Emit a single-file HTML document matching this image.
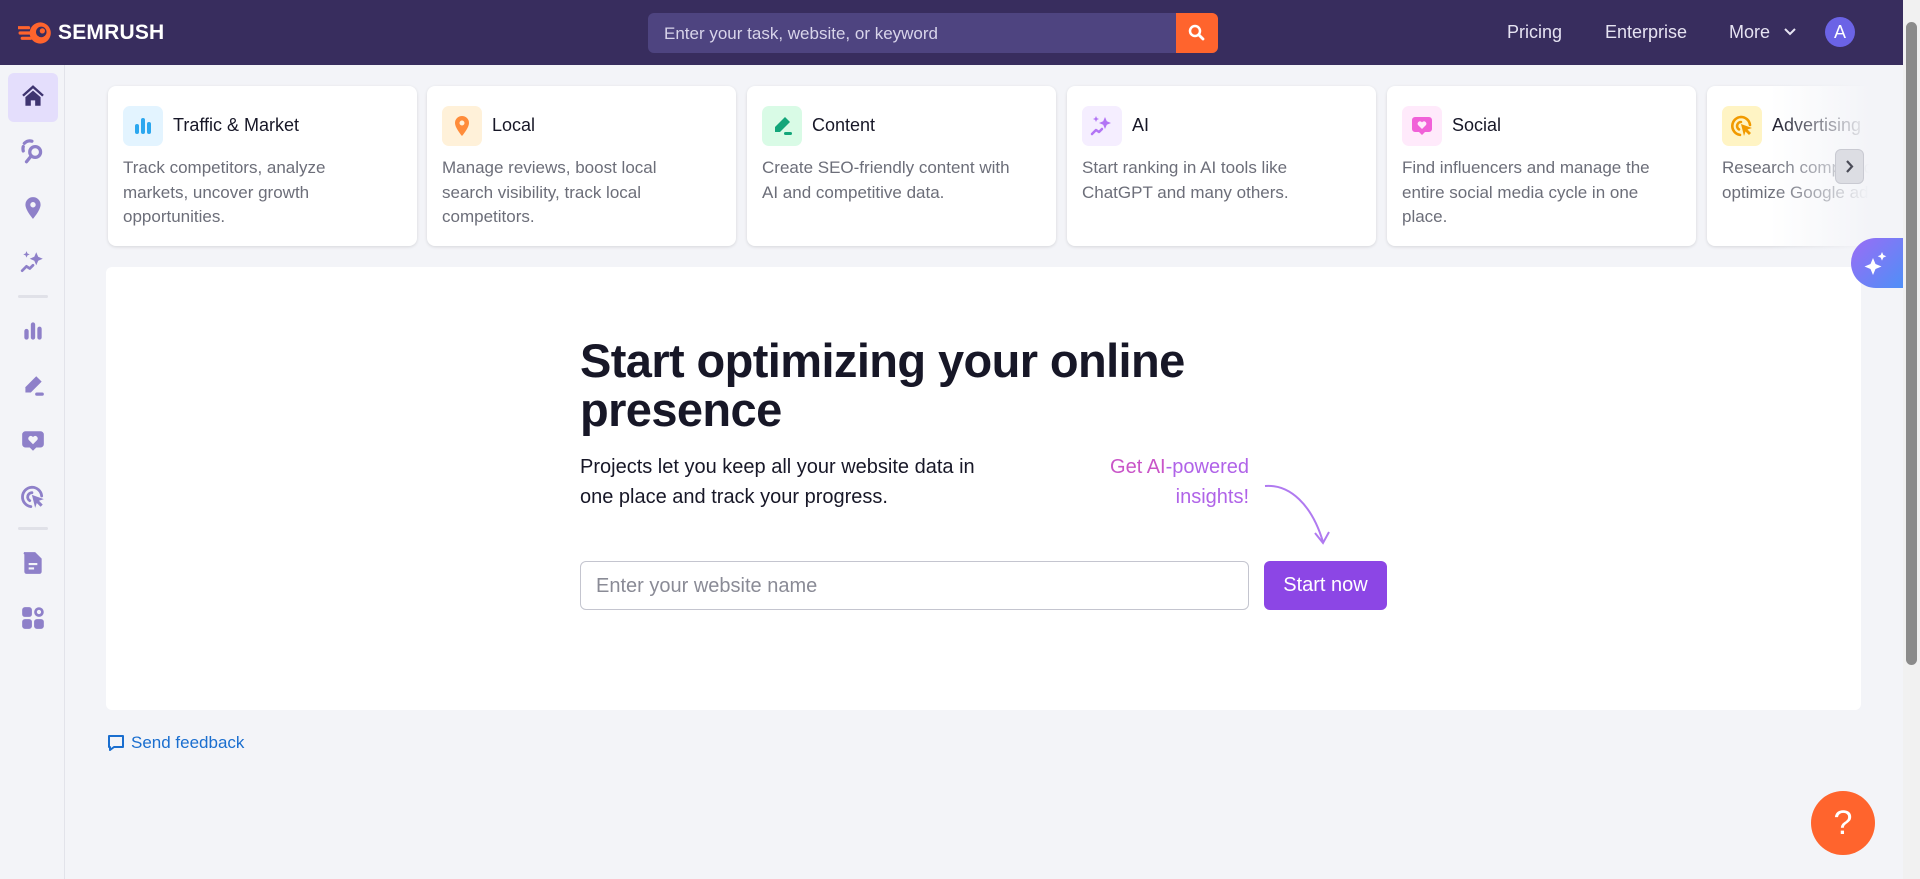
<!DOCTYPE html>
<html><head><meta charset="utf-8"><style>
*{box-sizing:border-box;margin:0;padding:0}
body{width:1920px;height:879px;overflow:hidden;background:#f3f4f8;font-family:"Liberation Sans",sans-serif;position:relative;color:#1b1b29}
.hdr{position:absolute;left:0;top:0;width:1903px;height:65px;background:#382d5e}
.logo{position:absolute;left:18px;top:20px;display:flex;align-items:center;color:#fff;font-weight:bold;font-size:21px;letter-spacing:0.2px}
.search{position:absolute;left:648px;top:13px;width:570px;height:40px;background:#4e4480;border-radius:6px}
.search span{position:absolute;left:16px;top:11px;color:#d8d4ea;font-size:17px}
.sbtn{position:absolute;right:0;top:0;width:42px;height:40px;background:#ff642d;border-radius:0 6px 6px 0}
.nav{position:absolute;top:22px;color:#e6e3f2;font-size:18px}
.av{position:absolute;left:1825px;top:17px;width:30px;height:30px;border-radius:50%;background:#6b63e6;color:#fff;font-size:18px;text-align:center;line-height:30px}
.scroll{position:absolute;left:1903px;top:0;width:17px;height:879px;background:#f1f1f1;z-index:10}
.scroll div{position:absolute;left:3px;top:22px;width:11px;height:643px;background:#8b8b8b;border-radius:6px}
.side{position:absolute;left:0;top:65px;width:65px;height:814px;border-right:1px solid #e2e3ea;background:#f3f4f8}
.si{position:absolute;left:20px;width:26px;height:26px}
.div{position:absolute;left:18px;width:30px;height:3px;background:#e0e1e8;border-radius:2px}
.card{position:absolute;top:86px;width:309px;height:160px;background:#fff;border-radius:8px;box-shadow:0 1px 3px rgba(0,0,0,.12)}
.ib{position:absolute;left:15px;top:20px;width:40px;height:40px;border-radius:7px}
.ct{position:absolute;left:65px;top:29px;font-size:18px;color:#171727}
.cd{position:absolute;left:15px;top:70px;width:258px;font-size:17px;line-height:24.5px;color:#6c6e79}
.panel{position:absolute;left:106px;top:267px;width:1755px;height:443px;background:#fff;border-radius:6px}
h1{position:absolute;left:580px;top:336px;font-size:47px;line-height:49px;font-weight:bold;color:#171727;letter-spacing:-0.6px}
.p{position:absolute;left:580px;top:452px;font-size:20px;line-height:30px;color:#171727;width:420px}
.ai{position:absolute;left:1040px;top:452px;width:209px;text-align:right;font-size:20px;line-height:30px;color:#b063e8}
.inp{position:absolute;left:580px;top:561px;width:669px;height:49px;border:1px solid #c4c5cf;border-radius:6px;color:#8a8b96;font-size:20px;padding:13px 15px}
.btn{position:absolute;left:1264px;top:561px;width:123px;height:49px;background:#8c46e5;border-radius:6px;color:#fff;font-size:20px;text-align:center;line-height:49px}
</style></head><body>
<svg width="0" height="0" style="position:absolute"><defs>
<symbol id="bars" viewBox="0 0 24 24"><rect x="4" y="10" width="4" height="10" rx="2"/><rect x="10" y="4" width="4" height="16" rx="2"/><rect x="16" y="8" width="4" height="12" rx="2"/></symbol>
<symbol id="pin" viewBox="0 0 24 24"><path d="M12 2a7 7 0 0 0-7 7c0 5 7 13 7 13s7-8 7-13a7 7 0 0 0-7-7zm0 9.5a2.5 2.5 0 1 1 0-5 2.5 2.5 0 0 1 0 5z"/></symbol>
<symbol id="pen" viewBox="0 0 24 24"><path d="M15 3l5 5-10 10H5v-5z"/><rect x="14" y="18" width="8" height="3" rx="1.5"/></symbol>
<symbol id="spark" viewBox="0 0 24 24"><path d="M15 3l1.8 4.2L21 9l-4.2 1.8L15 15l-1.8-4.2L9 9l4.2-1.8z"/><path d="M6 2l.9 2.1L9 5l-2.1.9L6 8l-.9-2.1L3 5l2.1-.9z"/><path d="M2 20l4-4 3 2 3-3" stroke-width="2.5" stroke-linecap="round" stroke-linejoin="round" fill="none" stroke="currentColor"/></symbol>
<symbol id="heart" viewBox="0 0 24 24"><path d="M5 3h14a3 3 0 0 1 3 3v9a3 3 0 0 1-3 3h-4l-3 3-3-3H5a3 3 0 0 1-3-3V6a3 3 0 0 1 3-3zm7 12l4-4a2.2 2.2 0 0 0-4-2.6A2.2 2.2 0 0 0 8 11z" fill-rule="evenodd"/></symbol>
<symbol id="target" viewBox="0 0 24 24"><path d="M11 3a9 9 0 0 0-1 17.9" stroke="currentColor" stroke-width="2.6" fill="none" stroke-linecap="round"/><path d="M11 8a4 4 0 0 0-2 7.4" stroke="currentColor" stroke-width="2.6" fill="none" stroke-linecap="round"/><path d="M20 11a9 9 0 0 0-9-8" stroke="currentColor" stroke-width="2.6" fill="none" stroke-linecap="round"/><path d="M11 10l11 4-4.5 1.5 3.5 3.5-2 2-3.5-3.5L14 22z"/></symbol>
</defs></svg>

<div class="hdr">
 <div class="logo"><svg width="36" height="26" viewBox="0 0 34 24"><path d="M0 7h10M2 12h9M4 17h8" stroke="#ff642d" stroke-width="3" stroke-linecap="round"/><circle cx="21" cy="12" r="10" fill="#ff642d"/><circle cx="22" cy="11" r="5" fill="#382d5e"/><circle cx="23" cy="10" r="2.5" fill="#ff642d"/></svg><span style="margin-left:4px">SEMRUSH</span></div>
 <div class="search"><span>Enter your task, website, or keyword</span><div class="sbtn"><svg width="42" height="40" viewBox="0 0 42 40"><circle cx="19" cy="18" r="5" stroke="#fff" stroke-width="2.5" fill="none"/><path d="M23 22l4 4" stroke="#fff" stroke-width="2.8" stroke-linecap="round"/></svg></div></div>
 <div class="nav" style="left:1507px">Pricing</div>
 <div class="nav" style="left:1605px">Enterprise</div>
 <div class="nav" style="left:1729px">More</div>
 <svg style="position:absolute;left:1783px;top:25px" width="14" height="14" viewBox="0 0 14 14"><path d="M2 4l5 5 5-5" stroke="#e6e3f2" stroke-width="2" fill="none"/></svg>
 <div class="av">A</div>
</div>

<div class="side">
 <div style="position:absolute;left:8px;top:8px;width:50px;height:49px;background:#e4defc;border-radius:6px"></div>
 <svg class="si" style="top:18px;color:#3e3470" viewBox="0 0 24 24" fill="currentColor"><path d="M12 2L2 11l1.5 1.5L12 5l8.5 7.5L22 11z"/><path d="M5 13l7-6 7 6v8h-5v-5h-4v5H5z"/></svg>
 <svg class="si" style="top:74px;color:#8e80c9" viewBox="0 0 24 24"><circle cx="14" cy="12" r="5" stroke="currentColor" stroke-width="3" fill="none"/><path d="M10 16l-4 5M4 4a7 7 0 0 1 7-2M3 11a8 8 0 0 1 0-4" stroke="currentColor" stroke-width="3" stroke-linecap="round" fill="none"/></svg>
 <svg class="si" style="top:130px;color:#8e80c9" fill="currentColor"><use href="#pin"/></svg>
 <svg class="si" style="top:184px;color:#8e80c9" fill="currentColor"><use href="#spark"/></svg>
 <div class="div" style="top:230px"></div>
 <svg class="si" style="top:253px;color:#8e80c9" fill="currentColor"><use href="#bars"/></svg>
 <svg class="si" style="top:308px;color:#8e80c9" fill="currentColor"><use href="#pen"/></svg>
 <svg class="si" style="top:363px;color:#8e80c9" fill="currentColor"><use href="#heart"/></svg>
 <svg class="si" style="top:419px;color:#8e80c9" fill="currentColor"><use href="#target"/></svg>
 <div class="div" style="top:462px"></div>
 <svg class="si" style="top:485px;color:#8e80c9" viewBox="0 0 24 24" fill="currentColor"><path d="M5 2h9l6 6v12a2 2 0 0 1-2 2H6a2 2 0 0 1-2-2V4a1 1 0 0 1 1-2z"/><path d="M8 13h8M8 17h5" stroke="#f3f4f8" stroke-width="2"/></svg>
 <svg class="si" style="top:540px;color:#8e80c9" viewBox="0 0 24 24" fill="currentColor"><rect x="2" y="2" width="9" height="9" rx="2.5"/><circle cx="17.5" cy="6.5" r="3.2" stroke="currentColor" stroke-width="2.5" fill="none"/><rect x="2" y="13" width="9" height="9" rx="2.5"/><rect x="13" y="13" width="9" height="9" rx="2.5"/></svg>
</div>

<div class="card" style="left:108px"><div class="ib" style="background:#e3f4ff"><svg style="margin:8px" width="24" height="24" fill="#2ba7ef"><use href="#bars"/></svg></div><div class="ct">Traffic &amp; Market</div><div class="cd">Track competitors, analyze markets, uncover growth opportunities.</div></div>
<div class="card" style="left:427px"><div class="ib" style="background:#fff1d9"><svg style="margin:8px" width="24" height="24" fill="#ff8c3a"><use href="#pin"/></svg></div><div class="ct">Local</div><div class="cd">Manage reviews, boost local search visibility, track local competitors.</div></div>
<div class="card" style="left:747px"><div class="ib" style="background:#d9fbe6"><svg style="margin:8px" width="24" height="24" fill="#13a67a"><use href="#pen"/></svg></div><div class="ct">Content</div><div class="cd">Create SEO-friendly content with AI and competitive data.</div></div>
<div class="card" style="left:1067px"><div class="ib" style="background:#f5eeff"><svg style="margin:8px;color:#b274f5" width="24" height="24" fill="#b274f5"><use href="#spark"/></svg></div><div class="ct">AI</div><div class="cd">Start ranking in AI tools like ChatGPT and many others.</div></div>
<div class="card" style="left:1387px"><div class="ib" style="background:#ffeafb"><svg style="margin:8px" width="24" height="24" fill="#f161d8"><use href="#heart"/></svg></div><div class="ct">Social</div><div class="cd">Find influencers and manage the entire social media cycle in one place.</div></div>
<div class="card" style="left:1707px"><div class="ib" style="background:#fff4c4"><svg style="margin:8px;color:#f19a00" width="24" height="24" fill="#f19a00"><use href="#target"/></svg></div><div class="ct">Advertising</div><div class="cd" style="width:230px">Research competitors and optimize Google ads.</div></div>
<div style="position:absolute;left:1770px;top:80px;width:133px;height:175px;background:linear-gradient(90deg,rgba(243,244,248,0),#f3f4f8 75%)"></div>
<div style="position:absolute;left:1835px;top:149px;width:29px;height:35px;background:#dcdde3;border:1px solid #c9cad2;border-radius:6px"><svg width="27" height="33" viewBox="0 0 27 33"><path d="M11 11l5 5.5-5 5.5" stroke="#4a4b57" stroke-width="2.2" fill="none"/></svg></div>

<div class="panel"></div>
<div style="position:absolute;left:1851px;top:238px;width:52px;height:50px;border-radius:25px 0 0 25px;background:linear-gradient(135deg,#9b6cf5,#4f8ff7);z-index:5"><svg width="50" height="50" viewBox="0 0 50 50" fill="#fff"><path d="M22 20l2.5 6 6 2.5-6 2.5-2.5 6-2.5-6-6-2.5 6-2.5z"/><path d="M31 14l1.3 3 3 1.3-3 1.3-1.3 3-1.3-3-3-1.3 3-1.3z"/></svg></div>

<h1>Start optimizing your online<br>presence</h1>
<div class="p">Projects let you keep all your website data in one place and track your progress.</div>
<div class="ai"><span style="color:#c955c8">Get AI</span>-powered<br>insights!</div>
<svg style="position:absolute;left:1260px;top:480px" width="80" height="72" viewBox="0 0 80 72"><path d="M5 6C30 4 52 25 63 62" stroke="#b07af0" stroke-width="2" fill="none"/><path d="M55 53l8 10 6-11" stroke="#b07af0" stroke-width="2" fill="none"/></svg>
<div class="inp">Enter your website name</div>
<div class="btn">Start now</div>

<svg style="position:absolute;left:106px;top:733px" width="20" height="20" viewBox="0 0 20 20"><path d="M3 3h14v11H8l-4 3v-3H3z" stroke="#1a6ecf" stroke-width="2" fill="none" stroke-linejoin="round"/></svg>
<div style="position:absolute;left:131px;top:733px;font-size:17px;color:#1a6ecf">Send feedback</div>

<div style="position:absolute;left:1811px;top:791px;width:64px;height:64px;border-radius:50%;background:#ff642d;color:#fff;font-size:34px;text-align:center;line-height:64px">?</div>
<div class="scroll"><div></div></div>
</body></html>
